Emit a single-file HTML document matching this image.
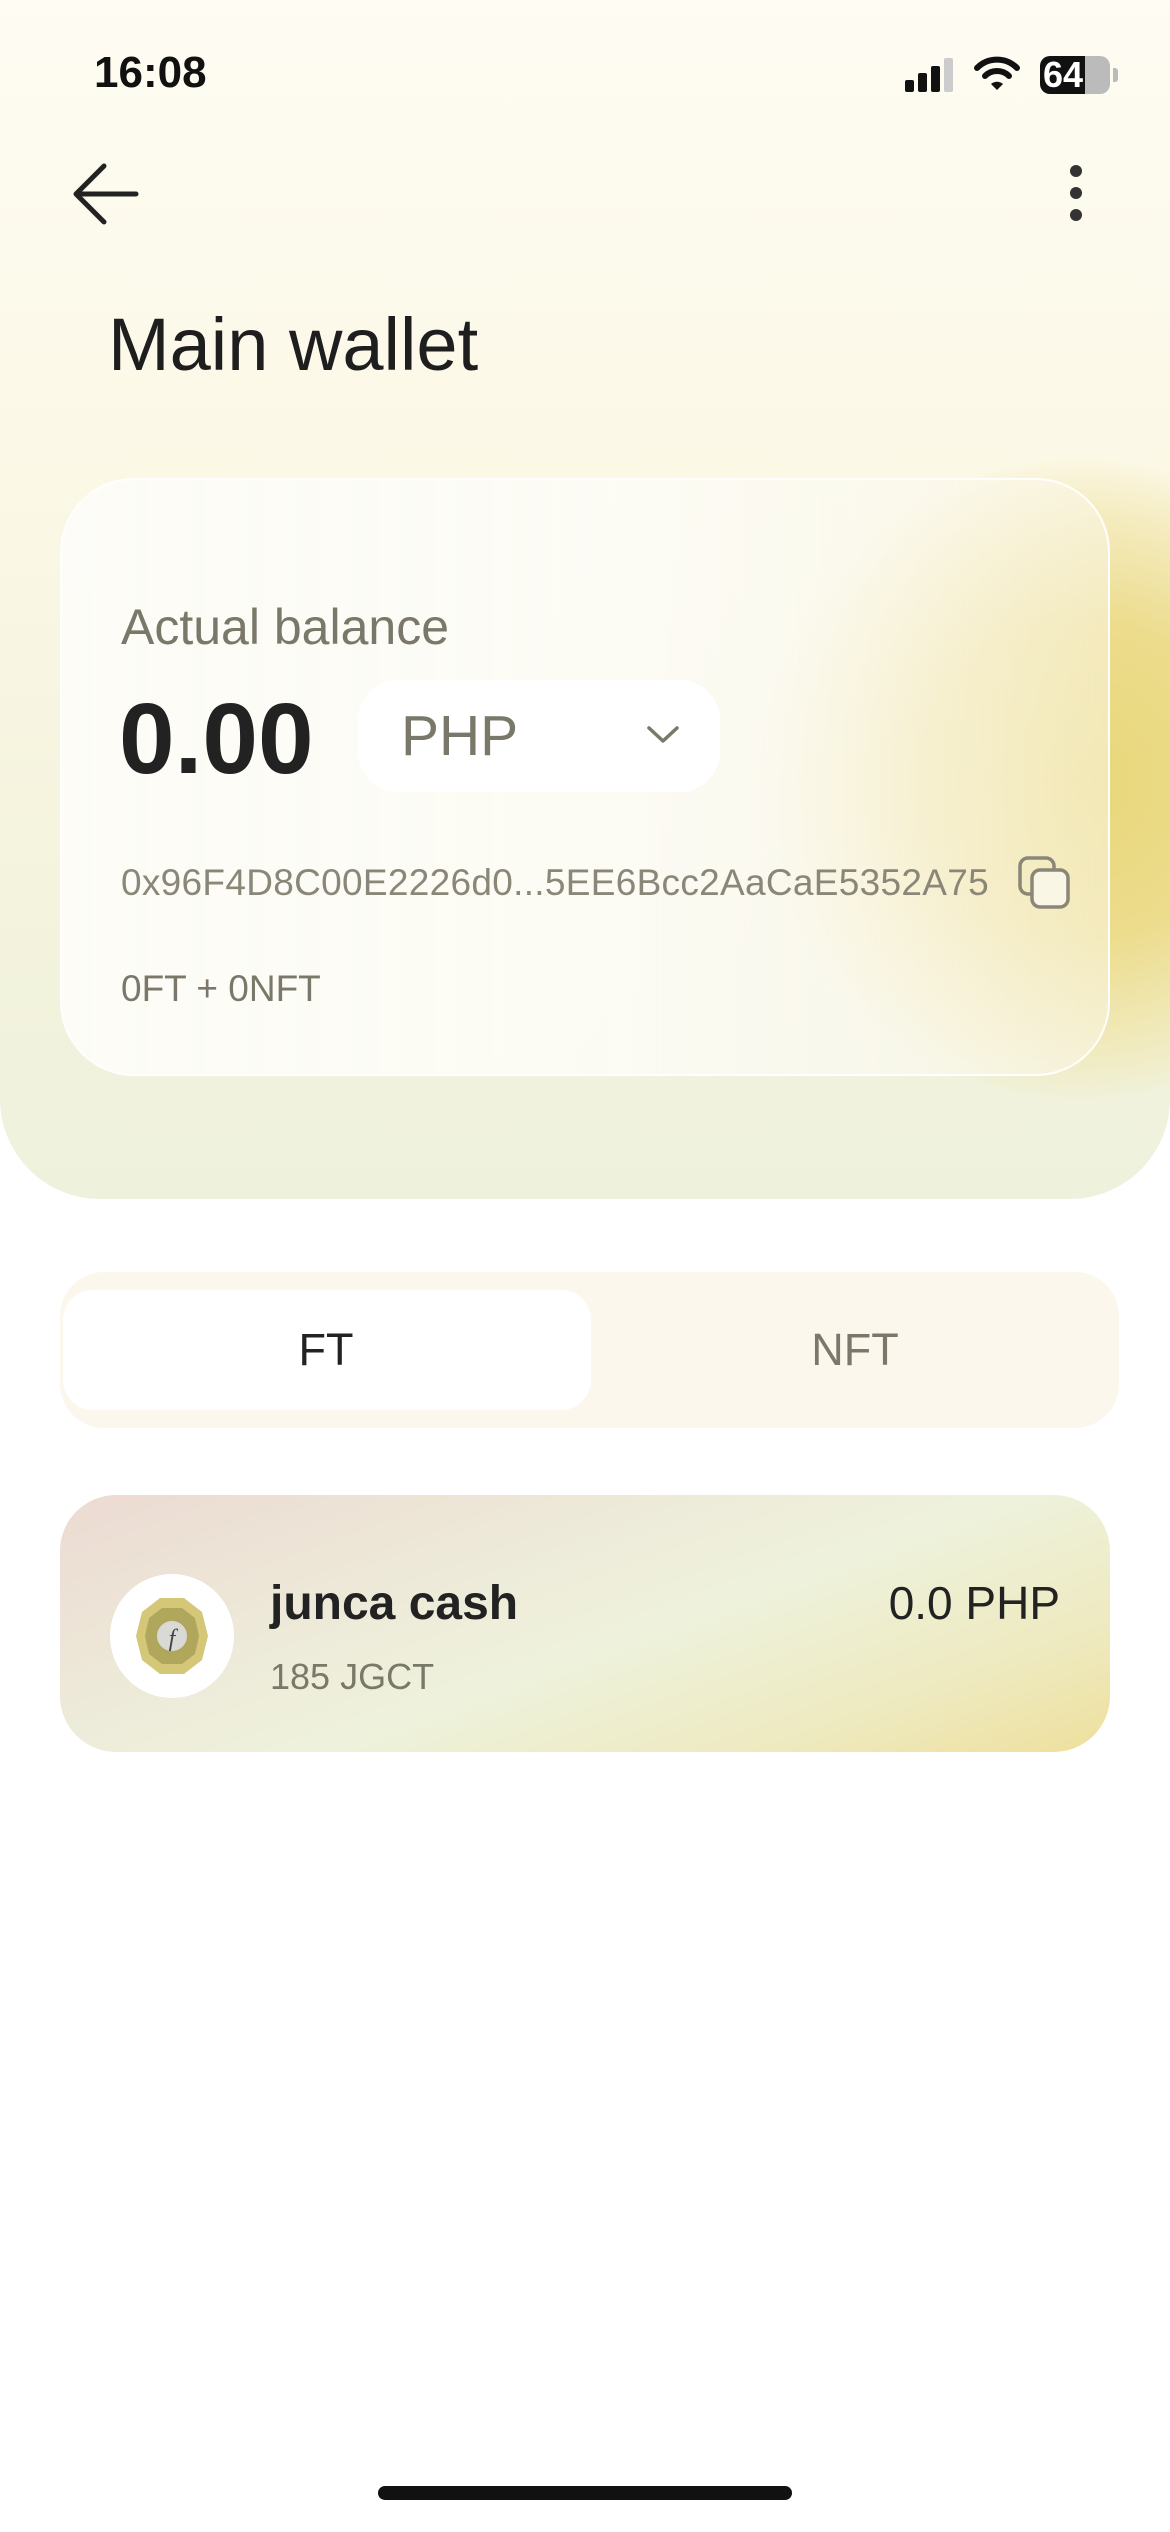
<!DOCTYPE html>
<html><head><meta charset="utf-8"><style>
*{margin:0;padding:0;box-sizing:border-box}
body{width:1170px;height:2532px;background:#fff;font-family:"Liberation Sans",sans-serif;position:relative;overflow:hidden}
.hdr{position:absolute;left:0;top:0;width:1170px;height:1199px;border-radius:0 0 100px 100px;background:linear-gradient(180deg,#fefcf3 0%,#fbf8e6 40%,#f4f3dd 75%,#eef2dd 100%);overflow:hidden}
.blob{position:absolute;left:760px;top:460px;width:640px;height:640px;border-radius:50%;background:radial-gradient(circle,#e9d779 0%,#ecdc8c 35%,rgba(240,226,160,.5) 60%,rgba(250,245,220,0) 72%)}
.card{position:absolute;left:60px;top:478px;width:1050px;height:598px;border-radius:74px;background:linear-gradient(90deg,rgba(253,252,248,.97) 0%,rgba(252,251,245,.93) 55%,rgba(250,246,230,.55) 100%);border:2px solid rgba(255,255,255,.9)}
.t{position:absolute;white-space:nowrap}
</style></head><body>
<div class="hdr"><div class="blob"></div></div>
<div class="t" style="left:94px;top:48px;font-size:44px;font-weight:bold;color:#111">16:08</div>
<svg class="t" style="left:905px;top:58px" width="48" height="34"><rect x="0" y="22" width="9" height="12" rx="2" fill="#111"/><rect x="13" y="15" width="9" height="19" rx="2" fill="#111"/><rect x="26" y="8" width="9" height="26" rx="2" fill="#111"/><rect x="39" y="0" width="9" height="34" rx="2" fill="#ccc"/></svg>
<svg class="t" style="left:974px;top:56px" width="46" height="36" viewBox="0 0 46 36"><path d="M3 12 A28 28 0 0 1 43 12" stroke="#111" stroke-width="6" fill="none" stroke-linecap="round"/><path d="M11 20 A17 17 0 0 1 35 20" stroke="#111" stroke-width="6" fill="none" stroke-linecap="round"/><path d="M17 28 L23 34 L29 28 A9 9 0 0 0 17 28Z" fill="#111"/></svg>
<div class="t" style="left:1040px;top:56px;width:70px;height:38px;border-radius:10px;background:linear-gradient(90deg,#111 64%,#bbb 64%)"></div>
<div class="t" style="left:1043px;top:54px;font-size:36px;font-weight:bold;color:#fff">64</div>
<div class="t" style="left:1113px;top:68px;width:5px;height:14px;border-radius:0 3px 3px 0;background:#bbb"></div>
<svg class="t" style="left:70px;top:162px" width="72" height="64"><path d="M66 32H6M34 4L6 32L34 60" stroke="#222" stroke-width="5" fill="none" stroke-linecap="round" stroke-linejoin="round"/></svg>
<svg class="t" style="left:1066px;top:162px" width="20" height="62"><circle cx="10" cy="9" r="6" fill="#333"/><circle cx="10" cy="31" r="6" fill="#333"/><circle cx="10" cy="53" r="6" fill="#333"/></svg>
<div class="t" style="left:108px;top:302px;font-size:74px;color:#1e1e1e">Main wallet</div>
<div class="card"></div>
<div class="t" style="left:121px;top:598px;font-size:50px;color:#7a7869">Actual balance</div>
<div class="t" style="left:119px;top:682px;font-size:100px;font-weight:bold;color:#222">0.00</div>
<div class="t" style="left:358px;top:680px;width:362px;height:112px;border-radius:40px;background:#fff"></div>
<div class="t" style="left:401px;top:708px;font-size:57px;color:#7a7869;line-height:1">PHP</div>
<svg class="t" style="left:646px;top:725px" width="34" height="20"><path d="M3 3L17 16L31 3" stroke="#7a7869" stroke-width="3.5" fill="none" stroke-linecap="round" stroke-linejoin="round"/></svg>
<div class="t" style="left:121px;top:862px;font-size:37px;color:#8a8778;letter-spacing:.3px">0x96F4D8C00E2226d0...5EE6Bcc2AaCaE5352A75</div>
<svg class="t" style="left:1017px;top:855px" width="56" height="56"><rect x="3" y="3" width="34" height="36" rx="8" stroke="#8a8778" stroke-width="3.5" fill="none"/><rect x="15" y="15" width="36" height="37" rx="8" stroke="#8a8778" stroke-width="3.5" fill="#faf6e6"/></svg>
<div class="t" style="left:121px;top:968px;font-size:37px;color:#7a7869">0FT + 0NFT</div>
<div class="t" style="left:60px;top:1272px;width:1059px;height:156px;border-radius:44px;background:#fbf7ec"></div>
<div class="t" style="left:63px;top:1290px;width:528px;height:120px;border-radius:30px;background:#fff"></div>
<div class="t" style="left:0;top:1324px;width:652px;text-align:center;font-size:45px;color:#222">FT</div>
<div class="t" style="left:591px;top:1324px;width:528px;text-align:center;font-size:45px;color:#7a7869">NFT</div>
<div class="t" style="left:60px;top:1495px;width:1050px;height:257px;border-radius:56px;background:linear-gradient(160deg,#ecdad2 0%,#ede8d8 30%,#eef2dc 55%,#eeeac0 80%,#eedf9c 100%)"></div>
<div class="t" style="left:110px;top:1574px;width:124px;height:124px;border-radius:50%;background:#fff"></div>
<svg class="t" style="left:132px;top:1596px" width="80" height="80" viewBox="0 0 80 80"><polygon points="28,2 52,2 70,16 76,40 70,64 52,78 28,78 10,64 4,40 10,16" fill="#d4c878"/><polygon points="30,12 50,12 63,22 67,40 63,58 50,68 30,68 17,58 13,40 17,22" fill="#b0a65c"/><circle cx="40" cy="40" r="15" fill="#d9d9d6"/><text x="40" y="50" font-size="24" font-style="italic" text-anchor="middle" fill="#444" font-family="Liberation Serif,serif">f</text></svg>
<div class="t" style="left:270px;top:1576px;font-size:48px;font-weight:bold;color:#222">junca cash</div>
<div class="t" style="left:270px;top:1656px;font-size:36px;color:#7a7869">185 JGCT</div>
<div class="t" style="right:110px;top:1576px;font-size:46px;color:#222">0.0 PHP</div>
<div class="t" style="left:378px;top:2486px;width:414px;height:14px;border-radius:7px;background:#111"></div>
</body></html>
